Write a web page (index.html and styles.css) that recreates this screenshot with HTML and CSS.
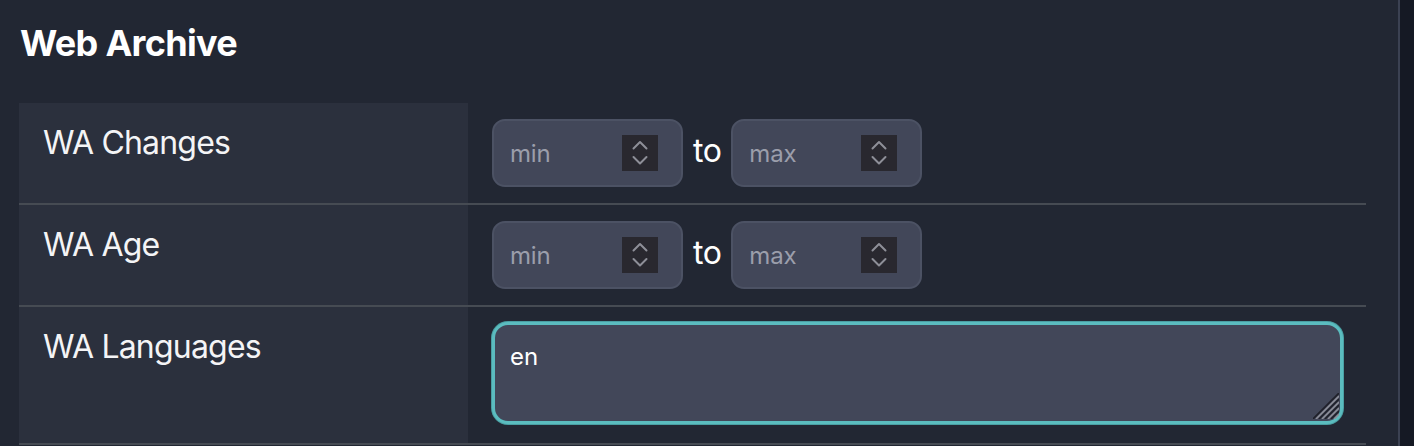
FILE: index.html
```html
<!DOCTYPE html>
<html lang="en">
<head>
<meta charset="utf-8">
<title>Web Archive</title>
<link rel="stylesheet" href="styles.css">
</head>
<body>
<div class="page">
  <main class="main">
    <h2 class="title">Web Archive</h2>
    <div class="table">
      <div class="row">
        <div class="label">WA Changes</div>
        <div class="value">
          <div class="num">
            <span class="ph">min</span>
            <span class="spin"><svg viewBox="0 0 36 36" width="36" height="36"><polyline points="11.5,13.5 18,7 24.5,13.5"/><polyline points="11.5,22 18,28.5 24.5,22"/></svg></span>
          </div>
          <span class="to">to</span>
          <div class="num">
            <span class="ph">max</span>
            <span class="spin"><svg viewBox="0 0 36 36" width="36" height="36"><polyline points="11.5,13.5 18,7 24.5,13.5"/><polyline points="11.5,22 18,28.5 24.5,22"/></svg></span>
          </div>
        </div>
      </div>
      <div class="row">
        <div class="label">WA Age</div>
        <div class="value">
          <div class="num">
            <span class="ph">min</span>
            <span class="spin"><svg viewBox="0 0 36 36" width="36" height="36"><polyline points="11.5,13.5 18,7 24.5,13.5"/><polyline points="11.5,22 18,28.5 24.5,22"/></svg></span>
          </div>
          <span class="to">to</span>
          <div class="num">
            <span class="ph">max</span>
            <span class="spin"><svg viewBox="0 0 36 36" width="36" height="36"><polyline points="11.5,13.5 18,7 24.5,13.5"/><polyline points="11.5,22 18,28.5 24.5,22"/></svg></span>
          </div>
        </div>
      </div>
      <div class="row">
        <div class="label">WA Languages</div>
        <div class="value value-area">
          <div class="area-wrap">
            <textarea class="area">en</textarea>
            <svg class="grip" viewBox="0 0 26 26" width="26" height="26">
              <line class="d" x1="0" y1="26" x2="26" y2="0"/>
              <line class="g" x1="3" y1="26" x2="26" y2="3"/>
              <line class="d" x1="6" y1="26" x2="26" y2="6"/>
              <line class="g" x1="9" y1="26" x2="26" y2="9"/>
              <line class="d" x1="12" y1="26" x2="26" y2="12"/>
              <line class="g" x1="15" y1="26" x2="26" y2="15"/>
              <line class="d" x1="18" y1="26" x2="26" y2="18"/>
              <line class="g" x1="21" y1="26" x2="26" y2="21"/>
            </svg>
          </div>
        </div>
      </div>
    </div>
  </main>
  <aside class="rail"></aside>
</div>
</body>
</html>
```
FILE: styles.css
```css
* { box-sizing: border-box; }
html, body { margin: 0; height: 100%; }
body {
  background: #151924;
  font-family: Inter, "Noto Sans", "Liberation Sans", sans-serif;
  color: #ffffff;
  overflow: hidden;
}
.page {
  display: flex;
  height: 446px;
}
.main {
  flex: 1;
  background: #222733;
  border-right: 2px solid #3b4152;
  padding: 0 32px 0 19px;
}
.rail {
  width: 14px;
  background: #151924;
}
.title {
  margin: 21px 0 38px 1px;
  font-size: 36px;
  line-height: 44px;
  font-weight: 700;
  letter-spacing: -0.7px;
  color: #ffffff;
}
.row {
  display: flex;
  border-bottom: 2px solid #464b53;
}
.label {
  width: 449px;
  flex: none;
  background: #2b303d;
  padding: 20px 24px;
  font-size: 32px;
  line-height: 40px;
  letter-spacing: -0.8px;
  color: #f4f4f6;
}
.value {
  flex: 1;
  display: flex;
  align-items: baseline;
  gap: 10px;
  padding: 16px 24px;
}
.num {
  width: 191px;
  height: 68px;
  border: 2px solid #4c5264;
  border-radius: 13px;
  background: #424759;
  display: flex;
  align-items: center;
  padding: 0 23px 0 16px;
}
.ph {
  flex: 1;
  font-size: 24px;
  line-height: 29px;
  letter-spacing: -0.2px;
  color: #9b9eab;
}
.spin {
  width: 36px;
  height: 36px;
  background: #29282f;
  display: flex;
}
.spin svg polyline {
  fill: none;
  stroke: #8e8f98;
  stroke-width: 2;
  stroke-linecap: round;
  stroke-linejoin: round;
}
.to {
  font-size: 32px;
  line-height: 39px;
  letter-spacing: -0.5px;
  color: #ffffff;
}
.value-area {
  display: block;
  padding: 15px 23px 19px 24px;
}
.area-wrap {
  position: relative;
}
.area {
  display: block;
  width: 100%;
  height: 102px;
  margin: 0;
  border: 3px solid #5bbcbf;
  box-shadow: 0 0 0 1px #4a9fa3;
  border-radius: 16px;
  background: #424759;
  color: #ffffff;
  font-family: Inter, "Noto Sans", "Liberation Sans", sans-serif;
  font-size: 24px;
  line-height: 36px;
  padding: 14px 15px;
  resize: none;
  outline: none;
  overflow: hidden;
}
.grip {
  position: absolute;
  right: 4px;
  bottom: 5px;
}
.grip line { stroke-width: 1.6; }
.grip .d { stroke: #1f2029; }
.grip .g { stroke: #8d8f99; }
```
